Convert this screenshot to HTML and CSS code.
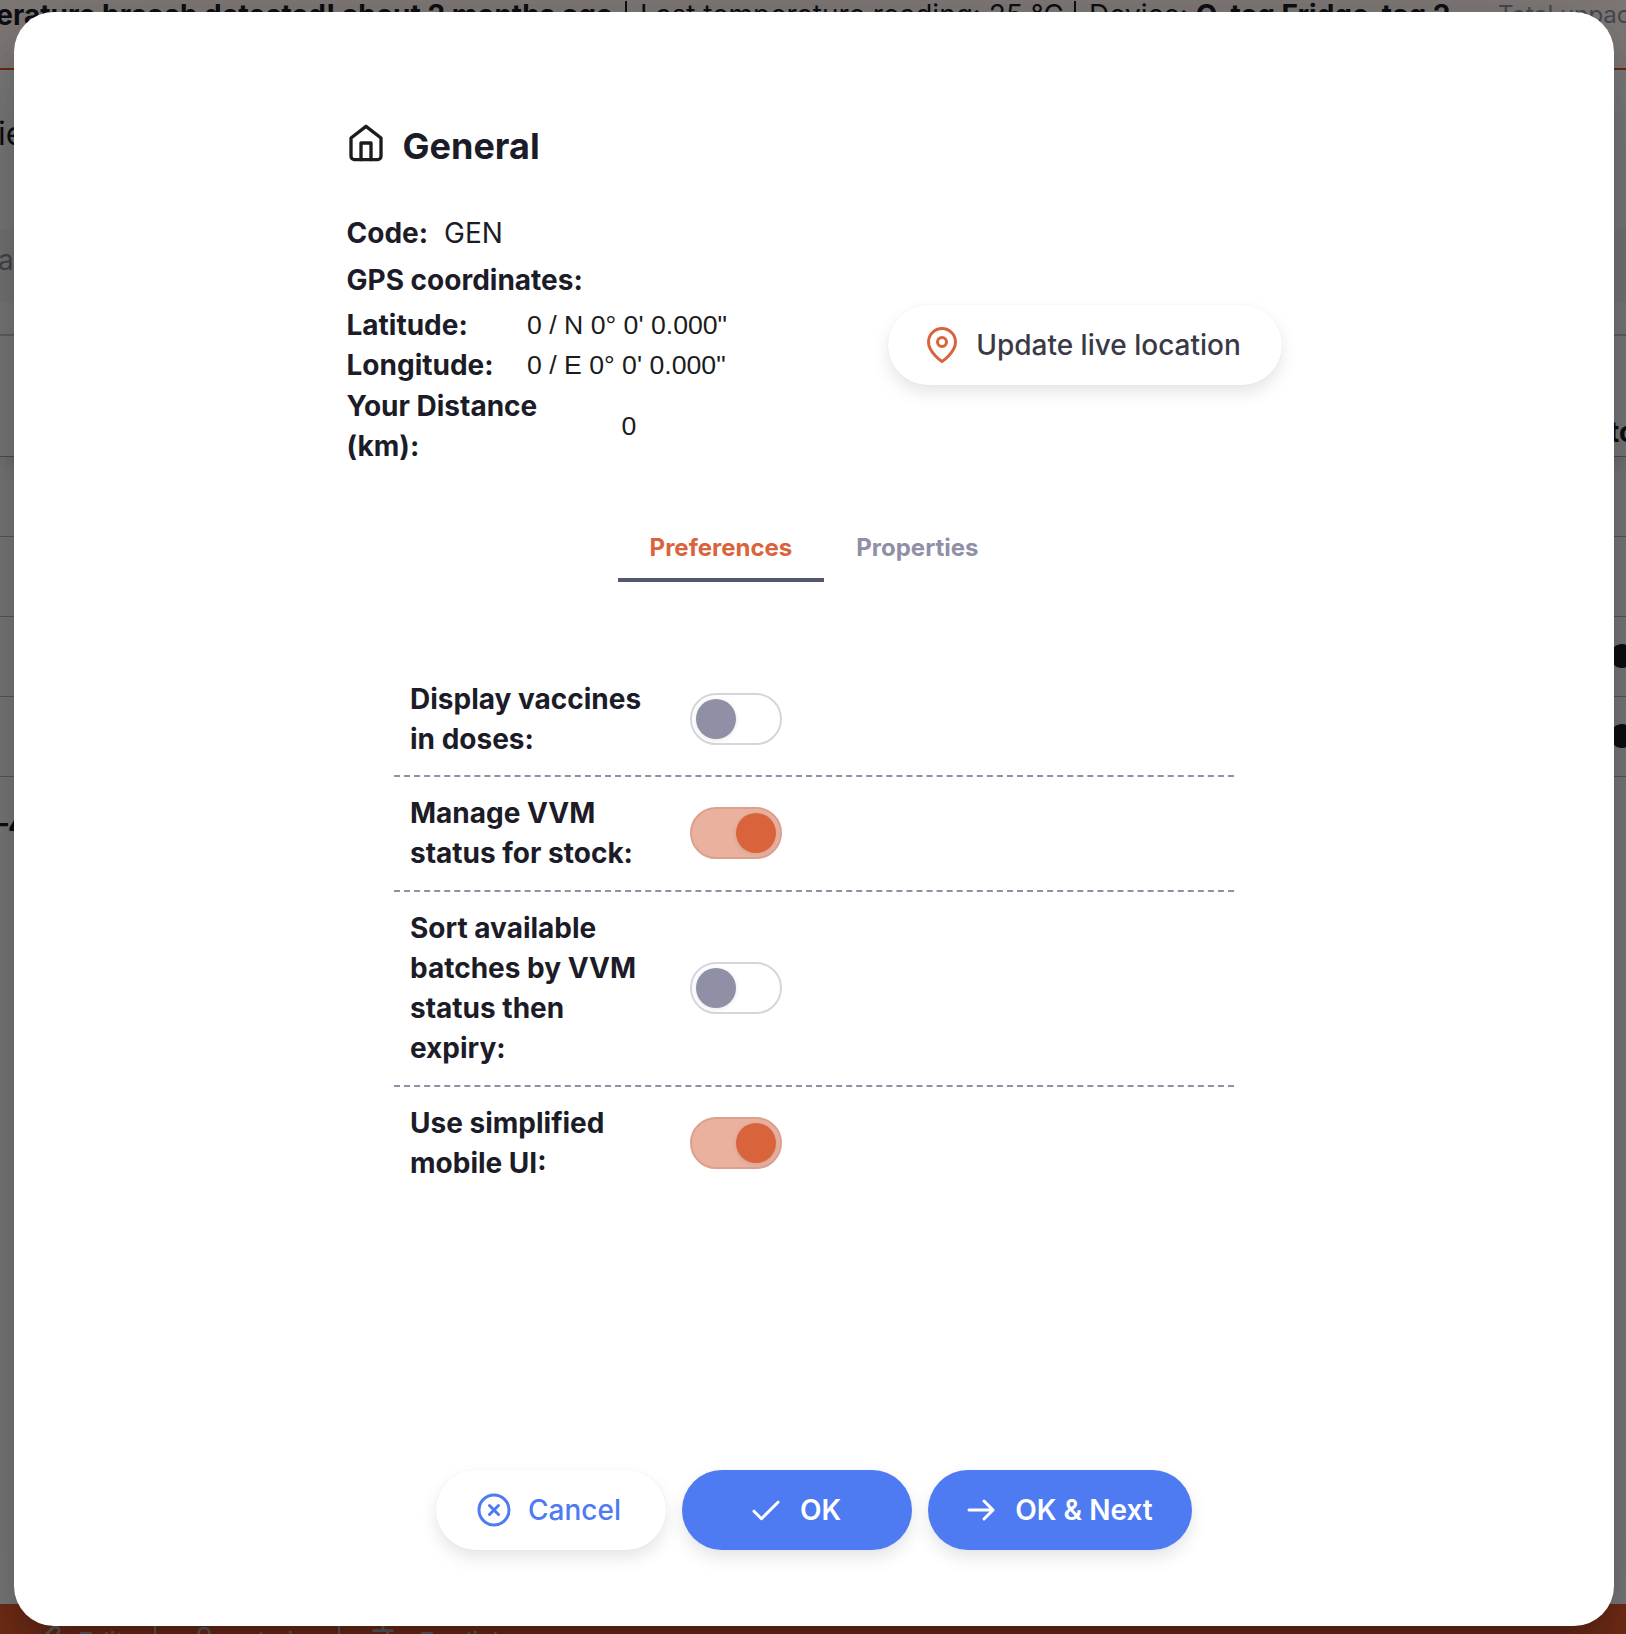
FILE: index.html
```html
<!DOCTYPE html>
<html lang="en">
<head>
<meta charset="utf-8">
<title>General</title>
<link rel="stylesheet" href="styles.css">
</head>
<body>
<div class="page">
  <header class="alert">
    <b class="alert-title">Temperature breach detected! about 2 months ago</b>
    <span class="alert-sep"></span>
    <span class="alert-reading">Last temperature reading: 25 °C</span>
    <span class="alert-sep"></span>
    <span class="alert-device">Device: <b>Q-tag Fridge-tag 2</b></span>
    <span class="alert-total">Total unpacked</span>
  </header>
  <div class="crumb">ie</div>
  <div class="search">a</div>
  <div class="table">
    <div class="thead"><span>to</span></div>
    <div class="tr"></div>
    <div class="tr"></div>
    <div class="tr"><i class="dot"></i></div>
    <div class="tr"><i class="dot"></i></div>
  </div>
  <div class="pager">–4</div>
  <footer class="footer">
    <svg class="foot-icon" viewBox="0 0 24 24"><path d="M17 3a2.8 2.8 0 1 1 4 4L7.500 20.500 2 22l1.500-5.500z"/></svg>
    <span class="foot-text foot-edit">Edit</span>
    <span class="foot-sep"></span>
    <svg class="foot-icon foot-user" viewBox="0 0 24 24"><circle cx="12" cy="7" r="4"/><path d="M20 21v-2a4 4 0 0 0-4-4H8a4 4 0 0 0-4 4v2"/></svg>
    <span class="foot-text foot-admin">admin</span>
    <span class="foot-sep"></span>
    <svg class="foot-icon foot-lang" viewBox="0 0 24 24"><path d="M2 5h14M9 2v3M13 5c-1 5-5 9-10 11M5 9c2 4 5 6 8 7M12 22l5-11 5 11M14 18h6"/></svg>
    <span class="foot-text">English</span>
  </footer>
</div>
<div class="backdrop"></div>

<main class="modal">
  <div class="title">
    <svg class="title-icon" viewBox="0 0 24 24"><path d="M3 9l9-7 9 7v11a2 2 0 0 1-2 2H5a2 2 0 0 1-2-2z"/><path d="M9 22V12h6v10"/></svg>
    <h1>General</h1>
  </div>
  <section class="details">
    <div class="info">
      <p class="code"><b>Code:</b><span>GEN</span></p>
      <p class="gps"><b>GPS coordinates:</b></p>
      <div class="coord"><b>Latitude:</b><span class="value">0 / N 0° 0' 0.000"</span></div>
      <div class="coord"><b>Longitude:</b><span class="value">0 / E 0° 0' 0.000"</span></div>
      <div class="coord distance"><b>Your Distance (km):</b><span class="value">0</span></div>
    </div>
    <button class="btn btn-location">
      <svg class="icon" viewBox="0 0 24 24"><path d="M21 10c0 7-9 13-9 13s-9-6-9-13a9 9 0 0 1 18 0z"/><circle cx="12" cy="10" r="3"/></svg>
      <span>Update live location</span>
    </button>
  </section>
  <nav class="tabs">
    <a class="tab active">Preferences</a>
    <a class="tab">Properties</a>
  </nav>
  <section class="prefs">
    <div class="pref"><b>Display vaccines in doses:</b><span class="switch"></span></div>
    <div class="pref"><b>Manage VVM status for stock:</b><span class="switch on"></span></div>
    <div class="pref"><b>Sort available batches by VVM status then expiry:</b><span class="switch"></span></div>
    <div class="pref"><b>Use simplified mobile UI:</b><span class="switch on"></span></div>
  </section>
  <div class="actions">
    <button class="btn btn-cancel">
      <svg class="icon" viewBox="0 0 24 24"><circle cx="12" cy="12" r="10"/><path d="M15 9l-6 6M9 9l6 6"/></svg>
      <span>Cancel</span>
    </button>
    <button class="btn btn-primary btn-ok">
      <svg class="icon" viewBox="0 0 24 24"><path d="M20 6.800L9 17.800l-5-5"/></svg>
      <span>OK</span>
    </button>
    <button class="btn btn-primary btn-next">
      <svg class="icon" viewBox="0 0 24 24"><path d="M4 12h16M14 6l6 6-6 6"/></svg>
      <span>OK &amp; Next</span>
    </button>
  </div>
</main>
</body>
</html>
```

FILE: styles.css
```css
* { box-sizing: border-box; }

body {
  margin: 0;
  width: 1626px;
  height: 1634px;
  overflow: hidden;
  position: relative;
  font-family: Inter, "Liberation Sans", sans-serif;
  font-size: 28px;
  line-height: 40.25px;
  color: #1c1c28;
}

h1, p { margin: 0; }
svg { fill: none; stroke: currentColor; stroke-width: 2; stroke-linecap: round; stroke-linejoin: round; flex: none; }

/* Page behind the dialog */
.page {
  width: 1626px;
  height: 1634px;
  overflow: hidden;
  background: #fafafa;
  display: flex;
  flex-direction: column;
}

.alert {
  height: 70px;
  flex: none;
  display: flex;
  align-items: flex-start;
  padding-top: 1px;
  line-height: 28px;
  white-space: nowrap;
  background: #fff4ef;
  border-bottom: 2px solid #d9562b;
}
.alert > * { flex: none; }
.alert-title { width: 613px; display: flex; justify-content: flex-end; }
.alert-sep { width: 2px; height: 28px; margin: 0 13px 0 12px; background: #1c1c28; }
.alert-reading { width: 422px; }
.alert-device { width: 409px; }
.alert-total { font-size: 24px; color: #8f90a6; }

.crumb { height: 159px; padding-top: 44px; font-size: 32px; margin-left: -2px; }
.search { height: 73px; padding-top: 11px; background: #f2f2f5; color: #8f90a6; margin-left: -2px; }
.table { margin-top: 32px; border-top: 2px solid #c7c9d9; }
.thead {
  height: 121px;
  display: flex;
  justify-content: flex-end;
  align-items: flex-end;
  font-weight: 700;
  border-bottom: 1px solid #a0a1b5;
  box-shadow: 0 8px 16px rgba(96, 97, 112, .16);
}
.thead span { width: 17px; line-height: 48px; }
.tr { height: 80px; display: flex; justify-content: flex-end; align-items: center; border-bottom: 1px solid #b5b6c0; }
.dot { width: 24px; height: 24px; margin: 0 -8px 2px 0; border-radius: 50%; background: #1c1c28; }
.pager { flex: 1; padding-top: 28px; font-weight: 700; margin-left: -6px; }

.footer {
  height: 30px;
  flex: none;
  display: flex;
  align-items: flex-start;
  padding: 20px 0 0 30px;
  overflow: hidden;
  font-size: 26px;
  line-height: 24px;
  background: #e95c30;
  color: #c8c9d0;
}
.foot-icon { width: 32px; height: 32px; }
.foot-text { margin: 6px 0 0 16px; }
.foot-edit { width: 76px; }
.foot-sep { width: 2px; height: 28px; margin-top: 2px; background: #c8c9d0; }
.foot-user { margin-left: 32px; }
.foot-admin { width: 104px; margin-left: 14px; }
.foot-lang { margin-left: 31px; }

.backdrop { position: absolute; inset: 0; background: rgba(0, 0, 0, .5); }

/* Dialog */
.modal {
  position: absolute;
  left: 14px;
  top: 12px;
  width: 1600px;
  height: 1614px;
  padding: 108px 332px 76px;
  border-radius: 40px;
  background: #fff;
  box-shadow: 0 22px 30px -14px rgba(0, 0, 0, .2), 0 48px 76px 6px rgba(0, 0, 0, .14), 0 18px 92px 16px rgba(0, 0, 0, .12);
  display: flex;
  flex-direction: column;
}

.title { display: flex; align-items: flex-start; height: 92px; padding-top: 3px; }
.title-icon { width: 40px; height: 40px; color: #1c1c1c; }
.title h1 { font-size: 36px; line-height: 46px; margin-left: 16.5px; }

.details { display: flex; align-items: flex-start; height: 290px; }
.info { width: 542px; padding-left: .5px; flex: none; }
.code { display: flex; gap: 16px; height: 47px; padding-top: 1px; }
.gps { height: 46px; padding-top: 1px; }
.coord { display: flex; align-items: center; }
.coord b { width: 180.5px; flex: none; }
.coord.distance b { width: 240px; }
.distance .value { margin-left: 35px; }
.value { font-family: "Liberation Sans", Arial, sans-serif; font-size: 26.667px; line-height: 30px; color: #1c1c1c; }

.btn {
  height: 80px;
  padding: 0 5px 0 0;
  border: 0;
  border-radius: 40px;
  display: flex;
  align-items: center;
  justify-content: center;
  font: 500 28px/40px Inter, "Liberation Sans", sans-serif;
  background: #fff;
  box-shadow: 0 8px 16px rgba(96, 97, 112, .16), 0 0 2px rgba(40, 41, 61, .06);
}
.icon { width: 36px; height: 36px; margin-right: 16px; }
.btn-location { width: 394px; margin-top: 93px; color: #3a3a46; }
.btn-location .icon { color: #d9643c; }

.tabs { display: flex; align-self: center; height: 80px; }
.tab {
  height: 80px;
  padding: 0 32px;
  font-size: 24px;
  font-weight: 700;
  line-height: 92px;
  border-bottom: 4px solid transparent;
  color: #8f90a6;
}
.tab.active { color: #d9643c; border-color: #555770; }

.prefs { width: 840px; margin: 80.5px 0 0 48px; }
.pref { display: flex; align-items: center; padding: 16px; border-bottom: 2px dashed #8f90a6; }
.pref:last-child { border: 0; }
.pref b { width: 240px; flex: none; }
.switch { width: 92px; height: 52px; margin-left: 40px; border: 2px solid #d5d5de; border-radius: 26px; padding: 4px; display: flex; }
.switch::before { content: ""; width: 40px; height: 40px; border-radius: 50%; background: #8f90a6; box-shadow: 0 1px 4px rgba(40, 41, 61, .12); }
.switch.on { justify-content: flex-end; background: #eab19e; border-color: #dca08e; }
.switch.on::before { background: #d9643c; }

.actions { margin-top: auto; display: flex; gap: 16px; padding-left: 90px; }
.btn-cancel { width: 230px; color: #4e7af2; }
.btn-primary { width: 230px; background: #4e7af2; color: #fff; font-weight: 600; }
.btn-next { width: 264px; padding-right: 4px; }
```
